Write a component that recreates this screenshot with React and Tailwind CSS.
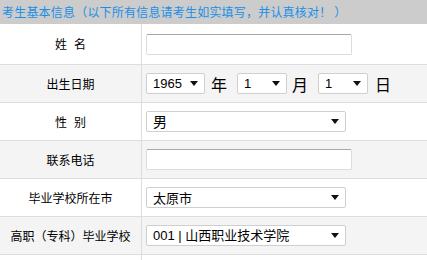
const CN = { fontFamily: '"Noto Sans CJK SC", "Liberation Sans", sans-serif' };
const MIX = { fontFamily: '"Liberation Sans", "Noto Sans CJK SC", sans-serif' };

function Arrow() {
  return (
    <svg width="8" height="5" viewBox="0 0 8 5" className="shrink-0">
      <path d="M0 0h8L4 5z" fill="#111" />
    </svg>
  );
}

function Select({ value, width }) {
  return (
    <div
      className="flex h-[21px] items-center justify-between rounded-[2px] border border-[#cfcfcf] bg-white pl-[6px] pr-[6px] text-[13px] text-black"
      style={{ width, ...MIX }}
    >
      <span className="leading-none">{value}</span>
      <Arrow />
    </div>
  );
}

function TextInput() {
  return (
    <div className="h-[21px] w-[206px] rounded-[2px] border border-[#dcdcdc] border-t-[#a8a8a8] bg-white" />
  );
}

function Row({ label, gray, h = 'h-[38px]', children }) {
  return (
    <div className={`flex ${h} border-b border-[#dddddd] ${gray ? 'bg-[#f4f4f4]' : 'bg-white'}`}>
      <div className="flex w-[142px] shrink-0 items-center justify-center border-r border-[#dddddd] text-[12px] text-black" style={CN}>
        {label}
      </div>
      <div className="flex flex-1 items-center pl-[4px]">{children}</div>
    </div>
  );
}

const Gap = () => <span className="inline-block w-[7px]" />;

export default function App() {
  return (
    <div className="h-[260px] w-[427px] overflow-hidden bg-white" style={CN}>
      <div className="flex h-[24px] items-center bg-[#cccccc] pl-[2px] text-[12px] tracking-[0.2px] text-[#1b8fe6]">
        考生基本信息（以下所有信息请考生如实填写，并认真核对！ ）
      </div>
      <Row label={<>姓<Gap />名</>} h="h-[41px]">
        <TextInput />
      </Row>
      <Row label="出生日期" gray>
        <Select value="1965" width={59} />
        <span className="ml-[6px] mr-[10px] text-[16px] text-black">年</span>
        <Select value="1" width={50} />
        <span className="ml-[5px] mr-[10px] text-[16px] text-black">月</span>
        <Select value="1" width={50} />
        <span className="ml-[7px] text-[16px] text-black">日</span>
      </Row>
      <Row label={<>性<Gap />别</>}>
        <Select value={<span className="text-[14px]" style={CN}>男</span>} width={200} />
      </Row>
      <Row label="联系电话" gray>
        <TextInput />
      </Row>
      <Row label="毕业学校所在市">
        <Select value={<span className="text-[13px]" style={CN}>太原市</span>} width={200} />
      </Row>
      <Row label="高职（专科）毕业学校" gray>
        <Select value={<span className="text-[13px]" style={MIX}>001 | 山西职业技术学院</span>} width={200} />
      </Row>
      <Row label="">
        <span />
      </Row>
    </div>
  );
}
